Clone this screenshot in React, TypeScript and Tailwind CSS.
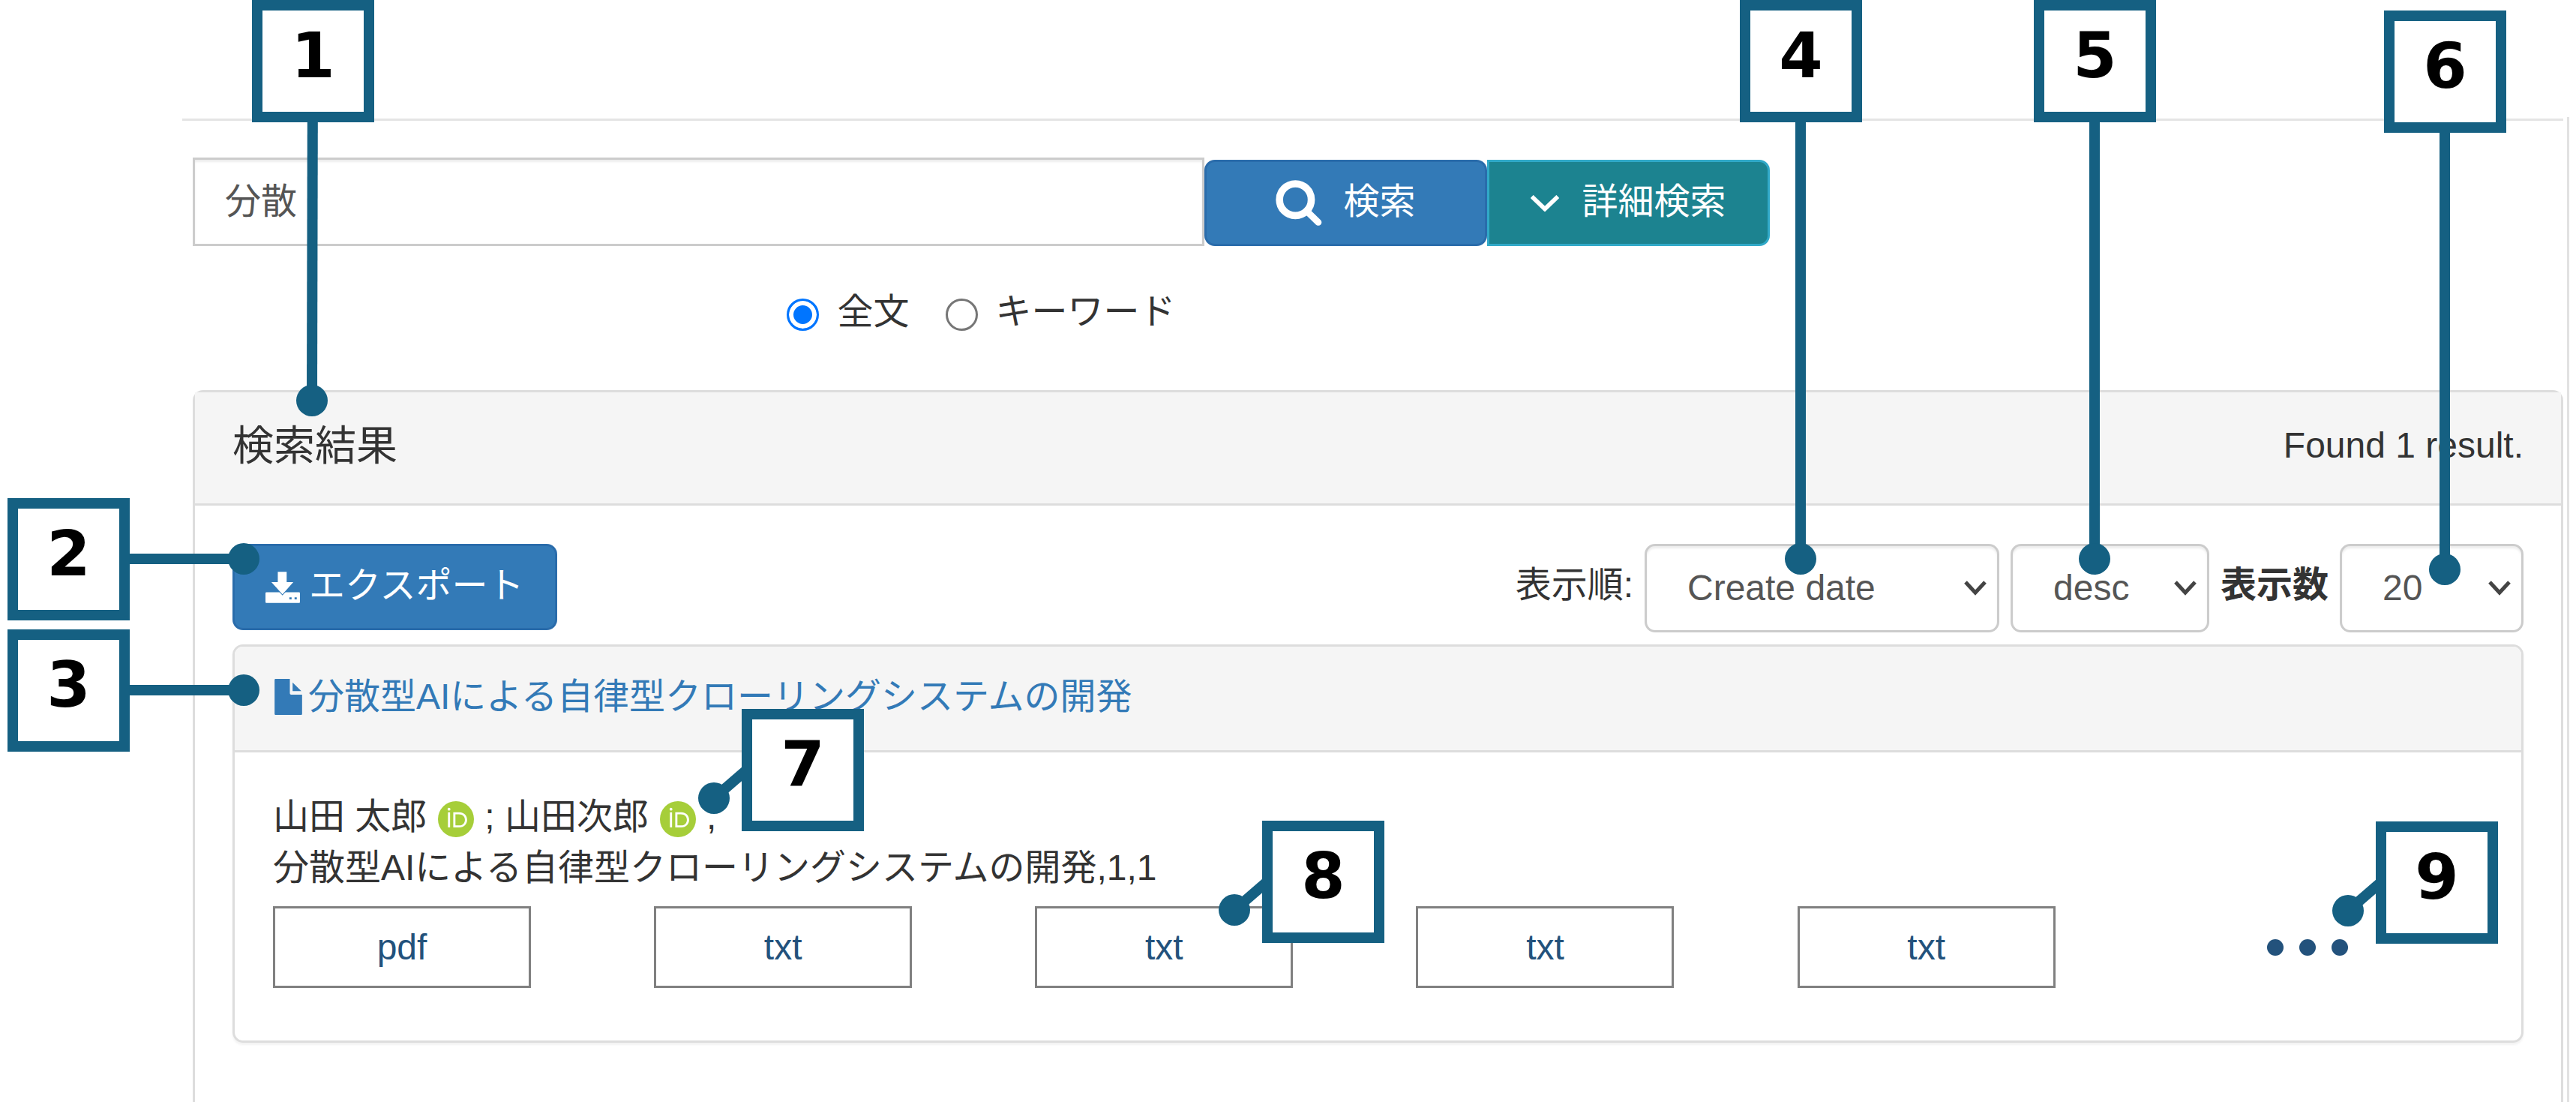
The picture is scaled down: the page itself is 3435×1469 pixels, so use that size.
import React from "react";

function SearchIcon() {
  return (
    <svg viewBox="0 0 186 184" className="h-[61px] w-[62px]" fill="none" stroke="#fff" aria-hidden="true">
      <circle cx="79" cy="79" r="64" strokeWidth="29" />
      <path d="M130 130L171 170" strokeWidth="27" strokeLinecap="round" />
    </svg>
  );
}

function ChevronIcon() {
  return (
    <svg viewBox="0 0 114 66" className="h-[22px] w-[38px]" fill="none" stroke="#fff" strokeWidth="17" aria-hidden="true">
      <path d="M5 6L57 56L109 6" />
    </svg>
  );
}

function DownloadIcon() {
  return (
    <svg viewBox="0 0 140 127" className="h-[42px] w-[46px]" aria-hidden="true">
      <path
        d="M4 83H136Q140 83 140 87V123Q140 127 136 127H4Q0 127 0 123V87Q0 83 4 83Z"
        fill="#fff"
      />
      <path d="M50 0H86V42H113L69 92L24 42H50Z" fill="#fff" stroke="#337ab7" strokeWidth="6" paintOrder="stroke" />
      <path d="M97 104H106V112H97ZM118 104H127V112H118Z" fill="#337ab7" />
    </svg>
  );
}

function FileIcon() {
  return (
    <svg viewBox="0 0 110 144" className="h-[48px] w-[37px] shrink-0" fill="#337ab7" aria-hidden="true">
      <path d="M4 0H61V58Q61 63 66 63H110V140Q110 144 106 144H4Q0 144 0 140V4Q0 0 4 0Z" />
      <path d="M72 14L107 49H72Z" />
    </svg>
  );
}

function OrcidIcon() {
  return (
    <svg viewBox="0 0 256 256" className="mt-[6px] mr-[14px] ml-[15px] size-[48px]" role="img" aria-label="ORCID iD">
      <circle cx="128" cy="128" r="128" fill="#a6ce39" />
      <g fill="#fff">
        <path d="M70.9 79.1H86.3V186.2H70.9Z" />
        <path d="M108.9 79.1h41.6c39.6 0 57 28.3 57 53.6 0 27.5-21.5 53.6-56.8 53.6h-41.8zm15.4 93.3h24.5c34.9 0 42.9-26.5 42.9-39.7 0-21.5-13.7-39.7-43.7-39.7h-23.7z" />
        <circle cx="78.6" cy="56.8" r="10.1" />
      </g>
    </svg>
  );
}

type SelectProps = { id: string; label: string; width: string; options: string[] };

function Select({ id, label, width, options }: SelectProps) {
  return (
    <div className={`relative ${width}`}>
      <select
        id={id}
        aria-label={label}
        className="h-[118px] w-full appearance-none rounded-[14px] border-[3px] border-[#ccc] bg-white pl-[54px] text-[#555] shadow-[inset_0_3px_3px_rgba(0,0,0,0.075)]"
      >
        {options.map((o) => (
          <option key={o}>{o}</option>
        ))}
      </select>
      <svg
        viewBox="0 0 30 20"
        className="pointer-events-none absolute top-[49px] right-[17px] h-[20px] w-[30px]"
        fill="none"
        stroke="#444"
        strokeWidth="5"
        aria-hidden="true"
      >
        <path d="M2 2L15 16L28 2" />
      </svg>
    </div>
  );
}

type CalloutProps = { n: number; place: string; from: [number, number]; to: [number, number] };

/* Numbered box with a leader that runs from its edge to a dot; points are relative to the box corner. */
function Callout({ n, place, from, to }: CalloutProps) {
  return (
    <div className={`absolute size-[163px] ${place}`}>
      <svg viewBox="0 0 163 163" className="absolute inset-0 size-full overflow-visible" aria-hidden="true">
        <line x1={from[0]} y1={from[1]} x2={to[0]} y2={to[1]} stroke="#156082" strokeWidth="14" />
        <circle cx={to[0]} cy={to[1]} r="21" fill="#156082" />
      </svg>
      <div className="relative flex size-full justify-center border-[14px] border-[#156082] bg-white pt-[11px] font-['DejaVu_Sans'] text-[84px] leading-[98px] font-bold text-black">
        {n}
      </div>
    </div>
  );
}

const files = ["pdf", "txt", "txt", "txt", "txt"];

export default function App() {
  return (
    <div className="relative flex min-h-screen flex-col overflow-hidden bg-white pt-[156px] pr-[9px] pl-[243px] font-['Liberation_Sans','Noto_Sans_CJK_JP',sans-serif] text-[48px] leading-[68px] text-[#333]">
      <main className="flex flex-1 flex-col border-r-[3px] border-[#e2e2e2] pr-[5px]">
        <hr className="mt-[2px] border-t-[3px] border-[#e4e4e4]" />

        <form className="mt-[49px] ml-[14px] w-[2103px] max-w-full" onSubmit={(e) => e.preventDefault()}>
          <div className="flex items-end">
            <input
              type="text"
              aria-label="検索キーワード"
              defaultValue="分散"
              className="h-[118px] min-w-0 flex-1 border-[3px] border-[#ccc] bg-white px-[40px] pb-[10px] text-[#555] shadow-[inset_0_3px_3px_rgba(0,0,0,0.075)]"
            />
            <button
              type="submit"
              className="flex h-[115px] w-[377px] items-center justify-center gap-[28px] rounded-[14px] border-[3px] border-[#2a6cab] bg-[#337ab7] text-white"
            >
              <SearchIcon />
              <span className="pb-[4px]">検索</span>
            </button>
            <button
              type="button"
              className="flex h-[115px] w-[377px] items-center justify-center gap-[30px] rounded-r-[14px] border-[3px] border-[#31a9c8] bg-[#1c8390] text-white"
            >
              <ChevronIcon />
              <span className="pb-[4px]">詳細検索</span>
            </button>
          </div>

          <div className="mt-[54px] flex items-center justify-center gap-[48px]">
            {["全文", "キーワード"].map((label, i) => (
              <label key={label} className="flex items-center gap-[24px]">
                <input
                  type="radio"
                  name="scope"
                  defaultChecked={i === 0}
                  className="mt-[6px] size-[43px] appearance-none rounded-full border-[3px] border-[#767676] checked:border-[#0075ff] checked:bg-[#0075ff] checked:shadow-[inset_0_0_0_6px_white]"
                />
                <span>{label}</span>
              </label>
            ))}
          </div>
        </form>

        <section className="mt-[70px] ml-[14px] flex flex-1 flex-col rounded-t-[14px] border-[3px] border-b-0 border-[#ddd]">
          <header className="flex h-[151px] items-center justify-between border-b-[3px] border-[#ddd] bg-[#f5f5f5] px-[50px] pb-[6px]">
            <h2 className="text-[55px]">検索結果</h2>
            <p>Found 1 result.</p>
          </header>

          <div className="px-[50px] pt-[51px]">
            <div className="flex items-start justify-between">
              <button
                type="button"
                className="flex h-[115px] items-center gap-[12px] rounded-[14px] border-[3px] border-[#2a6cab] bg-[#337ab7] px-[41px] text-white"
              >
                <DownloadIcon />
                <span className="pb-[4px]">エクスポート</span>
              </button>
              <div className="flex items-center gap-[15px]">
                <label htmlFor="order" className="pb-[8px]">表示順:</label>
                <Select id="order" label="表示順" width="w-[473px]" options={["Create date", "Title"]} />
                <Select id="direction" label="昇順・降順" width="w-[265px]" options={["desc", "asc"]} />
                <label htmlFor="size" className="pb-[8px] font-bold">表示数</label>
                <Select id="size" label="表示数" width="w-[245px]" options={["20", "50"]} />
              </div>
            </div>

            <article className="mt-[16px] rounded-[14px] border-[3px] border-[#ddd] shadow-[0_3px_3px_rgba(0,0,0,0.05)]">
              <header className="h-[141px] rounded-t-[11px] border-b-[3px] border-[#ddd] bg-[#f5f5f5] pt-[33px] pl-[53px]">
                <a href="#item" className="flex items-center gap-[8px] text-[#337ab7]">
                  <FileIcon />
                  分散型AIによる自律型クローリングシステムの開発
                </a>
              </header>
              <div className="pt-[52px] pb-[70px]">
                <p className="flex items-center pl-[51px] whitespace-pre">
                  <span>山田 太郎</span>
                  <OrcidIcon />
                  <span>; 山田次郎</span>
                  <OrcidIcon />
                  <span>,</span>
                </p>
                <p className="pl-[51px]">分散型AIによる自律型クローリングシステムの開発,1,1</p>
                <div className="mt-[17px] grid grid-cols-6 text-[#23527c]">
                  {files.map((f, i) => (
                    <a
                      key={i}
                      href="#file"
                      className="ml-[51px] flex h-[109px] w-[344px] items-center justify-center border-[3px] border-[#808080]"
                    >
                      {f}
                    </a>
                  ))}
                  <button
                    type="button"
                    aria-label="その他のファイル"
                    className="ml-[51px] flex h-[109px] w-[344px] items-center justify-center gap-[21px]"
                  >
                    <span className="size-[22px] rounded-full bg-[#23527c]" />
                    <span className="size-[22px] rounded-full bg-[#23527c]" />
                    <span className="size-[22px] rounded-full bg-[#23527c]" />
                  </button>
                </div>
              </div>
            </article>
          </div>
        </section>
      </main>

      <Callout n={1} place="top-0 left-[336px]" from={[81, 81]} to={[80, 534]} />
      <Callout n={2} place="top-[664px] left-[10px]" from={[81, 81]} to={[315, 81]} />
      <Callout n={3} place="top-[839px] left-[10px]" from={[81, 81]} to={[315, 81]} />
      <Callout n={4} place="top-0 right-[952px]" from={[81, 81]} to={[81, 745]} />
      <Callout n={5} place="top-0 right-[560px]" from={[81, 81]} to={[81, 745]} />
      <Callout n={6} place="top-[14px] right-[93px]" from={[81, 81]} to={[81, 745]} />
      <Callout n={7} place="top-[945px] left-[989px]" from={[7, 81]} to={[-37, 119]} />
      <Callout n={8} place="top-[1094px] left-[1683px]" from={[7, 81]} to={[-37, 119]} />
      <Callout n={9} place="top-[1095px] right-[104px]" from={[7, 81]} to={[-37, 119]} />
    </div>
  );
}
